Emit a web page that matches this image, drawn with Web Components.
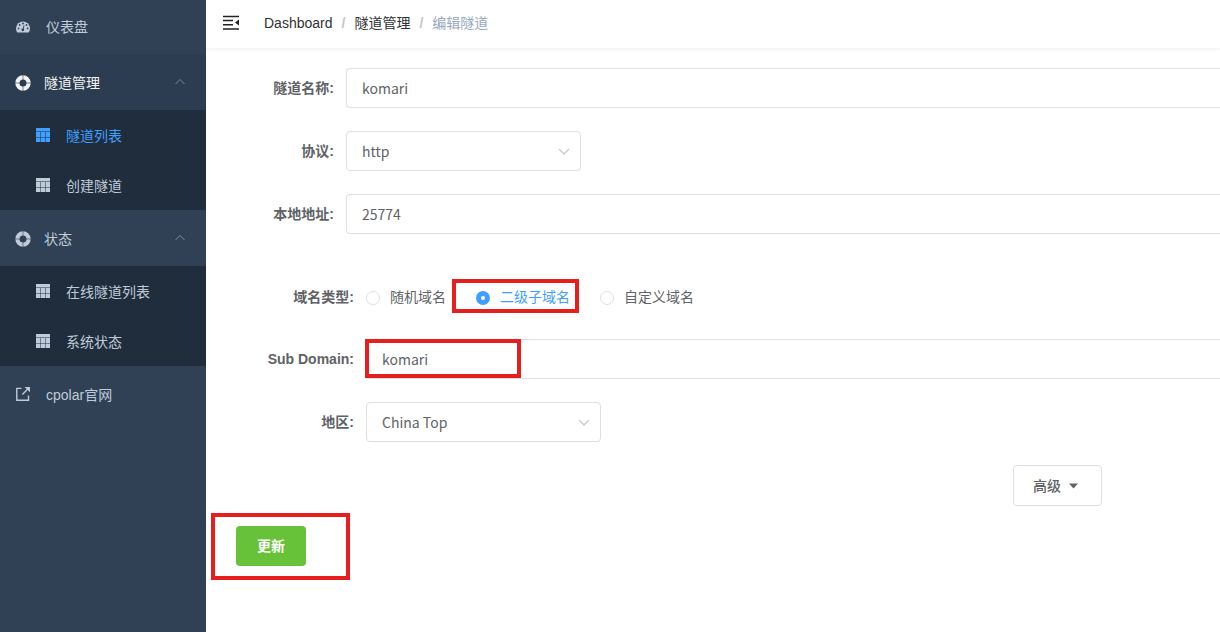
<!DOCTYPE html>
<html lang="zh-CN">
<head>
<meta charset="utf-8">
<title>编辑隧道</title>
<style>
html, body { height: 100%; }
body { margin: 0; font: 14px/20px "Liberation Sans", "Noto Sans CJK SC", sans-serif; color: #606266; background: #fff; }
</style>
</head>
<body>
<app-shell>
  <side-bar slot="side">
    <nav-item icon="dash" label="仪表盘" class="first"></nav-item>
    <nav-group label="隧道管理" active>
      <nav-item icon="table" label="隧道列表" sub current></nav-item>
      <nav-item icon="table" label="创建隧道" sub></nav-item>
    </nav-group>
    <nav-group label="状态">
      <nav-item icon="table" label="在线隧道列表" sub></nav-item>
      <nav-item icon="table" label="系统状态" sub></nav-item>
    </nav-group>
    <nav-item icon="link" label="cpolar官网"></nav-item>
  </side-bar>
  <top-bar></top-bar>
  <tunnel-form>
    <text-field label="隧道名称:" value="komari"></text-field>
    <select-field label="协议:" value="http"></select-field>
    <text-field label="本地地址:" value="25774"></text-field>
    <domain-group slot="domain">
      <radio-field></radio-field>
      <text-field label="Sub Domain:" value="komari" marked></text-field>
      <select-field label="地区:" value="China Top"></select-field>
    </domain-group>
    <more-button slot="more"></more-button>
    <submit-button slot="submit"></submit-button>
  </tunnel-form>
</app-shell>
<script>
const icons = {
  dash: `<svg width="14" height="14" viewBox="0 0 14 14"><path fill="currentColor" d="M1.3 12.6A7 7 0 1 1 12.7 12.6Z"/><g fill="var(--hole)"><circle cx="2.5" cy="8.4" r=".9"/><circle cx="3.7" cy="5" r=".9"/><circle cx="7" cy="3.5" r=".9"/><circle cx="10.5" cy="5" r=".9"/><circle cx="11.6" cy="8.4" r=".9"/><circle cx="6.8" cy="9.8" r="1.4"/><path d="M7.6 5.2l.9.2-1 4.3-.9-.2z"/></g></svg>`,
  ring: `<svg width="16" height="16" viewBox="0 0 16 16"><circle cx="8" cy="8" r="5.6" fill="none" stroke="currentColor" stroke-width="4.2"/><path d="M8 0v5M8 11v5M0 8h5M11 8h5" stroke="var(--hole)" stroke-width=".6"/></svg>`,
  table: `<svg width="14" height="14" viewBox="0 0 14 14"><path fill="currentColor" d="M0 0h14v14H0z"/><path d="M0 3.5h14M0 9.5h14M4.5 4v10M9.5 4v10" stroke="var(--hole)" stroke-width=".5" fill="none"/></svg>`,
  link: `<svg width="14" height="14" viewBox="0 0 14 14" fill="none" stroke="currentColor" stroke-width="1.4"><path d="M5.5 1.4H.8v11.8h11.7V8.5M6.4 7.4L12 1.8"/><path d="M8.6 0H14v5.2z" fill="currentColor" stroke="none"/></svg>`,
  up: `<svg width="12" height="12" viewBox="0 0 12 12" fill="none" stroke="#7f8b9a"><path d="M1.5 7L6 2.5 10.500 7"/></svg>`
};
const define = (name, render) => customElements.define(name, class extends HTMLElement {
  constructor() { super(); this.attachShadow({ mode: "open" }); }
  connectedCallback() {
    const get = k => this.getAttribute(k) || "";
    this.shadowRoot.innerHTML = "<style>*{box-sizing:border-box}:host{display:block}</style>" + render(get);
  }
});

define("app-shell", () => `<style>
:host{display:flex;min-height:100vh}
main{flex:1;min-width:0;overflow:hidden}
</style><slot name="side"></slot><main><slot></slot></main>`);

define("side-bar", () => `<style>
:host{width:206px;flex:none;background:#304156;color:#bfcbd9;--hole:#304156}
::slotted(.first){--row:54px;--drop:0}
</style><nav><slot></slot></nav>`);

define("nav-item", g => `<style>
:host{--height:var(--row,56px)}
:host([sub]){--height:50px;--hole:#1f2d3d}
:host([current]){color:#409eff}
a{display:flex;align-items:center;gap:16px;height:var(--height);padding:0 16px;color:inherit;text-decoration:none}
:host([sub]) a{padding-left:36px}
span{padding-top:var(--drop,2px)}
svg{flex:none}
</style><a href="#">${icons[g("icon")]}<span>${g("label")}</span></a>`);

define("nav-group", g => `<style>
:host([active]){--head:#f4f4f5;--bg:#2d3d51}
button{display:flex;align-items:center;gap:13px;width:100%;height:56px;padding:2px 20px 0 15px;border:0;background:var(--bg,#304156);color:var(--head,#bfcbd9);--hole:var(--bg,#304156);font:inherit;text-align:left}
button span{flex:1}
svg{flex:none}
div{background:#1f2d3d}
</style><button type="button" aria-expanded="true">${icons.ring}<span>${g("label")}</span>${icons.up}</button><div><slot></slot></div>`);

define("top-bar", () => `<style>
header{display:flex;align-items:center;height:48px;padding:0 16px 2px;gap:24px;box-shadow:0 1px 4px rgba(0,21,41,.08);color:#303133}
button{border:0;padding:0;background:none;display:flex;color:#222}
ol{display:flex;list-style:none;margin:0;padding:0}
li+li::before{content:"/";color:#c0c4cc;margin:0 9px;font-weight:bold}
a{color:inherit;text-decoration:none}
li:last-child{color:#97a8be}
</style><header><button type="button" aria-label="收起菜单"><svg width="18" height="18" viewBox="0 0 18 18" fill="none" stroke="currentColor" stroke-width="1.500"><path d="M1 2.500h16M1 6.600h10M1 10.700h10M1 15h16"/><path d="M17 5.600v6L13 8.600z" fill="currentColor" stroke="none"/></svg></button>
<ol><li><a href="#">Dashboard</a></li><li><a href="#">隧道管理</a></li><li aria-current="page">编辑隧道</li></ol></header>`);

define("tunnel-form", () => `<style>
form{padding:20px 0 20px 30px}
.fields{display:grid;gap:23px}
.domain{margin-top:42px}
.more{display:flex;justify-content:flex-end;padding:23px 118px 20px 0}
</style><form onsubmit="return false"><div class="fields"><slot></slot></div>
<div class="domain"><slot name="domain"></slot></div>
<div class="more"><slot name="more"></slot></div><slot name="submit"></slot></form>`);

define("domain-group", () => `<style>:host{display:grid;gap:23px;padding-left:20px}</style><slot></slot>`);

const row = `<style>
.row{display:grid;grid-template-columns:110px minmax(0,1fr)}
.name{padding-right:12px;text-align:right;font-weight:bold;line-height:40px}
.box{height:40px;border:1px solid #dcdfe6;border-radius:4px;background:#fff;color:#606266;font:14px/20px "Noto Sans CJK SC",sans-serif;padding:0 15px;outline:0;margin:0}
.wrap{position:relative}
</style>`;
const markCss = "position:absolute;border:4px solid #e61e1e;pointer-events:none";

define("text-field", g => `${row}<style>
input.box{width:100%;display:block;border-right:0;border-radius:4px 0 0 4px}
i{display:none}
:host([marked]) i{display:block;${markCss};left:-1px;top:0;width:156px;height:39px}
</style><div class="row"><label class="name" for="f">${g("label")}</label><div class="wrap"><input class="box" id="f" type="text" value="${g("value")}"><i></i></div></div>`);

define("select-field", g => `${row}<style>
.wrap{width:235px}
select.box{appearance:none;width:100%;display:block}
svg{position:absolute;right:11px;top:14px;pointer-events:none}
</style><div class="row"><label class="name" for="f">${g("label")}</label><div class="wrap"><select class="box" id="f"><option>${g("value")}</option></select><svg width="12" height="12" viewBox="0 0 12 12" fill="none" stroke="#c0c4cc" stroke-width="1.200"><path d="M1 4l5 5 5-5"/></svg></div></div>`);

define("radio-field", () => `${row}<style>
.row{padding-top:1px;height:40px}
.list{display:flex;gap:30px;align-items:center}
label{position:relative;display:flex;gap:10px;align-items:center;white-space:nowrap}
input{appearance:none;width:14px;height:14px;margin:2px 0 0;border:1px solid #dcdfe6;border-radius:50%;background:#fff}
input:checked{border:5px solid #409eff}
input:checked+span{color:#409eff}
i{${markCss};left:-24px;right:-9px;top:-8px;height:34px}
</style><div class="row" role="radiogroup" aria-labelledby="n"><span class="name" id="n">域名类型:</span><div class="list">
<label><input type="radio" name="type"><span>随机域名</span></label>
<label><input type="radio" name="type" checked><span>二级子域名</span><i></i></label>
<label><input type="radio" name="type"><span>自定义域名</span></label></div></div>`);

define("more-button", () => `<style>
button{display:flex;align-items:center;gap:8px;height:41px;width:89px;padding:0 19px;border:1px solid #dcdfe6;border-radius:4px;background:#fff;color:#606266;font:inherit;font-weight:500}
</style><button type="button"><span>高级</span><svg width="9" height="6" viewBox="0 0 9 6"><path d="M0 .5h9L4.500 5.500z" fill="currentColor"/></svg></button>`);

define("submit-button", () => `<style>
:host{position:relative;width:70px}
button{display:block;width:70px;height:40px;padding:0;border:0;border-radius:4px;background:#67c23a;color:#fff;font:inherit;font-weight:bold}
i{${markCss};left:-25px;top:-13px;width:139px;height:67px}
</style><button type="submit">更新</button><i></i>`);
</script>
</body>
</html>
